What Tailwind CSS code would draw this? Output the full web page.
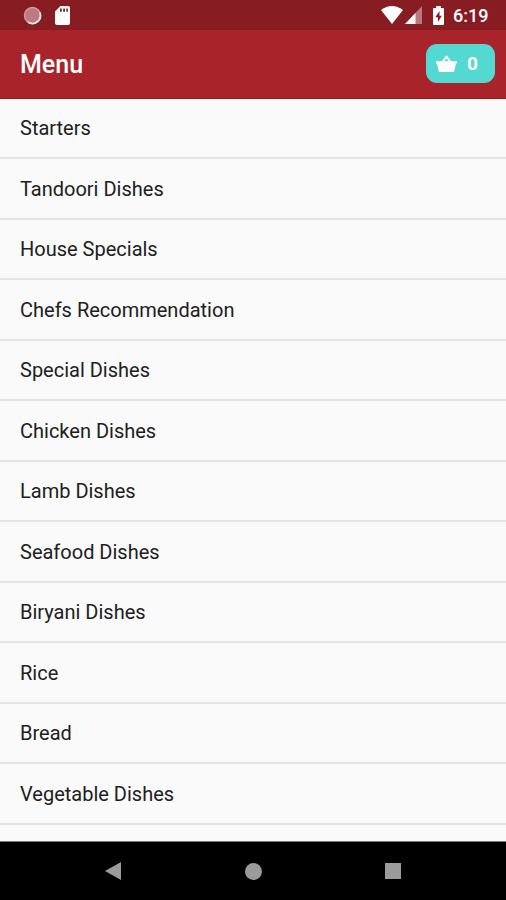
<!DOCTYPE html>
<html lang="en">
<head>
<meta charset="utf-8">
<title>Menu</title>
<script src="https://cdn.jsdelivr.net/npm/@tailwindcss/browser@4"></script>
</head>
<body class="w-[506px] h-[900px] overflow-hidden bg-[#fafafa] font-['Roboto',sans-serif] flex flex-col">
<div class="h-[30px] shrink-0 bg-[#871c22] flex items-center pl-[23px] pr-[18px] text-white">
  <svg class="w-[19px] h-[19px]" viewBox="0 0 19 19"><circle cx="9.5" cy="9.5" r="8" fill="#bd7b80" stroke="#cf9da0" stroke-width="1.4"/><path d="M16.8 6.5A8 8 0 0 1 5 16.2" fill="none" stroke="#fbeeee" stroke-width="1.6"/></svg>
  <svg class="w-[15px] h-[19px] ml-[13px]" viewBox="0 0 15 19"><path fill="#fff" fill-rule="evenodd" d="M5.5 0H13a2 2 0 0 1 2 2v15a2 2 0 0 1-2 2H2a2 2 0 0 1-2-2V5.500ZM5 2.500v3.300h1.800V2.500ZM8.200 2.500v3.300H10V2.500ZM11.300 2.500v3.300h1.600V2.500Z"/></svg>
  <svg class="w-[22px] h-[18px] ml-auto" viewBox="0 0 22 18"><path fill="#fff" d="M0 4Q11-4 22 4L11 18Z"/></svg>
  <svg class="w-[17px] h-[18px] ml-[2px]" viewBox="0 0 17 18"><path fill="#b9787b" d="M17 0V18H0Z"/><path fill="#fff" d="M10.500 6.900V18H0Z"/></svg>
  <svg class="w-[11px] h-[19px] ml-[11px]" viewBox="0 0 11 19"><path fill="#fff" d="M3.200 0h4.600v2H10a1 1 0 0 1 1 1v15a1 1 0 0 1-1 1H1a1 1 0 0 1-1-1V3a1 1 0 0 1 1-1h2.200Z"/><path fill="#871c22" d="M6.500 5 2.300 11.200h2.600V16l4-6.300H6.500Z"/></svg>
  <span class="ml-[9px] w-[35px] text-[18px] leading-[30px] font-medium whitespace-nowrap pt-[2px]">6:19</span>
</div>
<header class="h-[68.500px] shrink-0 bg-[#a9232b] border-b border-[#a0151c] flex items-center justify-between pl-5 pr-[11px] text-white">
  <h1 class="text-[25px] leading-8 font-medium pt-[3px]">Menu</h1>
  <button class="w-[69px] h-[39px] rounded-[11px] bg-[#54d9d2] flex items-center pl-[10px]">
    <svg class="w-[21px] h-[17px]" viewBox="0 0 21 17"><path d="M5.800 8 10.500 1.600 15.200 8" fill="none" stroke="#fff" stroke-width="2" stroke-linejoin="round"/><path fill="#fff" d="M0 6.300h21v2.200h-1L18.300 16a1 1 0 0 1-1 1H3.700a1 1 0 0 1-1-1L1 8.500H0Z"/></svg>
    <span class="ml-[10px] text-[19px] leading-6 font-bold">0</span>
  </button>
</header>
<main class="flex-1 min-h-0 overflow-hidden">
  <ul class="text-[20px] text-[#202020] [&>li]:h-[60.500px] [&>li]:flex [&>li]:items-center [&>li]:pl-5 [&>li]:pt-px [&>li]:border-b-2 [&>li]:border-[#e5e5e5]">
    <li>Starters</li>
    <li>Tandoori Dishes</li>
    <li>House Specials</li>
    <li>Chefs Recommendation</li>
    <li>Special Dishes</li>
    <li>Chicken Dishes</li>
    <li>Lamb Dishes</li>
    <li>Seafood Dishes</li>
    <li>Biryani Dishes</li>
    <li>Rice</li>
    <li>Bread</li>
    <li>Vegetable Dishes</li>
  </ul>
</main>
<nav class="h-[59px] shrink-0 bg-black border-t border-[#777777] flex items-center pl-[105px] text-[#9b9b9b]">
  <svg class="w-4 h-[18px]" viewBox="0 0 16 18"><path fill="currentColor" d="M16 0V18L0 9Z"/></svg>
  <span class="ml-[124px] w-[17px] h-[17px] rounded-full bg-current"></span>
  <span class="ml-[123px] w-4 h-4 bg-current"></span>
</nav>
</body>
</html>
